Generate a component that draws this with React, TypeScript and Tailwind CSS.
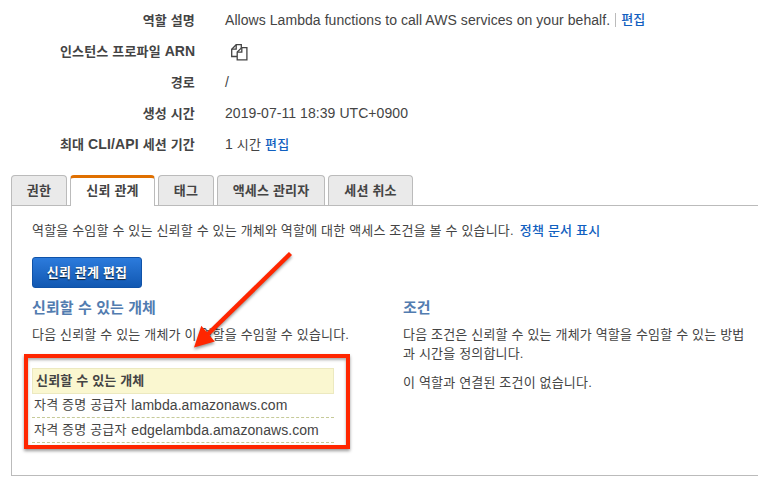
import type { ReactNode } from "react";
import clsx from "clsx";

function Ko({ children, className }: { children: ReactNode; className?: string }) {
  return <span className={clsx("text-[13px] tracking-[0.18px]", className)}>{children}</span>;
}

function Link({ children }: { children: ReactNode }) {
  return (
    <a className="cursor-pointer text-[13px] font-medium tracking-[0.2px] text-[#1160c0]">
      {children}
    </a>
  );
}

function Row({ label, children }: { label: ReactNode; children: ReactNode }) {
  return (
    <div className="flex h-[31px] items-center">
      <div className="w-[195px] text-right text-[13px] font-bold tracking-[0.18px]">{label}</div>
      <div className="flex items-center pb-px pl-[30px] tracking-[0.06px] whitespace-pre">{children}</div>
    </div>
  );
}

function CopyIcon() {
  return (
    <svg className="mt-0.5 ml-1.5" width="17" height="17" viewBox="0 0 17 17" fill="none" stroke="#444" strokeWidth="1.3">
      <path d="M6 12.5H0.7V5.2L5.2 0.7H10.3V4" />
      <path d="M5.2 0.7V5.2H0.7" />
      <path d="M10.8 3.6H15.9V15.9H6.2V8.1Z" />
      <path d="M10.8 3.6V8.1H6.2" />
    </svg>
  );
}

const tabs = [
  { name: "권한", width: "w-14" },
  { name: "신뢰 관계", width: "w-[85px]", active: true },
  { name: "태그", width: "w-14" },
  { name: "액세스 관리자", width: "w-[108px]" },
  { name: "세션 취소", width: "w-[85px]" },
];

const entities = ["lambda.amazonaws.com", "edgelambda.amazonaws.com"];

export default function App() {
  return (
    <div className="relative h-[490px] w-[758px] overflow-hidden bg-white font-['Liberation_Sans','Noto_Sans_CJK_KR',sans-serif] text-[14px] leading-[18px] text-[#444]">
      <div className="pt-[5px]">
        <Row label="역할 설명">
          <span>Allows Lambda functions to call AWS services on your behalf.</span>
          <span className="mr-[5px] ml-[5px] h-3.5 w-px bg-[#bbb]" />
          <Link>편집</Link>
        </Row>
        <Row label={<>인스턴스 프로파일 <span className="text-[14px] tracking-normal">ARN</span></>}>
          <CopyIcon />
        </Row>
        <Row label="경로">/</Row>
        <Row label="생성 시간">2019-07-11 18:39 UTC+0900</Row>
        <Row label={<>최대 <span className="text-[14px] tracking-[0.15px]">CLI/API</span> 세션 기간</>}>
          <span>1 <Ko>시간</Ko> <Link>편집</Link></span>
        </Row>
      </div>

      <div className="mt-[15px] ml-[11px] flex gap-[3px]">
        {tabs.map((t) => (
          <div
            key={t.name}
            className={clsx(
              "flex items-center justify-center rounded-t-[4px] border-x border-[#bbb] text-[13px] font-bold tracking-[0.18px]",
              t.width,
              t.active
                ? "relative z-10 -mb-px h-[31px] border-t-[3px] border-t-[#e07000] bg-white pb-[3px]"
                : "h-[30px] border-t bg-[#eaeaea]",
            )}
          >
            {t.name}
          </div>
        ))}
      </div>

      <div className="ml-[11px] h-[271px] w-[760px] border border-[#bbb] pt-[15px] pl-5">
        <p className="whitespace-pre">
          <Ko>역할을 수임할 수 있는 신뢰할 수 있는 개체와 역할에 대한 액세스 조건을 볼 수 있습니다.</Ko>
          <span className="inline-block w-[6px]" />
          <Link>정책 문서 표시</Link>
        </p>
        <button className="mt-[17px] flex h-[31px] w-[110px] items-center justify-center rounded-[3px] border border-[#0f52a8] bg-linear-to-b from-[#2c7bdc] to-[#1158b2] text-[13px] font-bold tracking-[0.18px] text-white [text-shadow:0_1px_1px_#123]">
          신뢰 관계 편집
        </button>
        <div className="flex pt-[10px]">
          <section className="w-[371px]">
            <h2 className="text-[15px] leading-5 font-bold tracking-[0.1px] text-[#527cb0]">신뢰할 수 있는 개체</h2>
            <p className="mt-[7px]"><Ko>다음 신뢰할 수 있는 개체가 이 역할을 수임할 수 있습니다.</Ko></p>
            <div className="mt-6 w-[302px]">
              <div className="flex h-[26px] items-center border border-[#ece9c0] bg-[#faf7d0] pl-[3px] text-[13px] font-bold tracking-[0.18px]">
                신뢰할 수 있는 개체
              </div>
              {entities.map((e, i) => (
                <div
                  key={e}
                  className={clsx(
                    "flex items-center border-b border-dashed border-[#c6ca98] pl-0.5 tracking-[0.06px] whitespace-pre",
                    i === 0 ? "h-6 pb-0.5" : "h-[25px]",
                  )}
                >
                  <Ko className="mr-px">자격 증명 공급자 </Ko>{e}
                </div>
              ))}
            </div>
          </section>
          <section className="w-[350px]">
            <h2 className="text-[15px] leading-5 font-bold text-[#527cb0]">조건</h2>
            <p className="mt-[7px] whitespace-pre"><Ko>{"다음 조건은 신뢰할 수 있는 개체가 역할을 수임할 수 있는 방법\n과 시간을 정의합니다."}</Ko></p>
            <p className="mt-[10px]"><Ko>이 역할과 연결된 조건이 없습니다.</Ko></p>
          </section>
        </div>
      </div>

      <div className="absolute top-[354px] left-6 h-[95px] w-[326px] border-4 border-[#ff2600] shadow-[0_2px_3px_#0006,inset_0_2px_3px_#0005]" />
      <svg className="absolute top-[245px] left-[185px] drop-shadow-[0_2px_1.5px_#0006]" width="115" height="112" viewBox="185 245 115 112">
        <path d="M290.5 253.5L207 335" stroke="#ff2600" strokeWidth="4.4" />
        <path d="M194 347.5L201.3 325.7L214.8 341.5Z" fill="#ff2600" />
      </svg>
    </div>
  );
}
